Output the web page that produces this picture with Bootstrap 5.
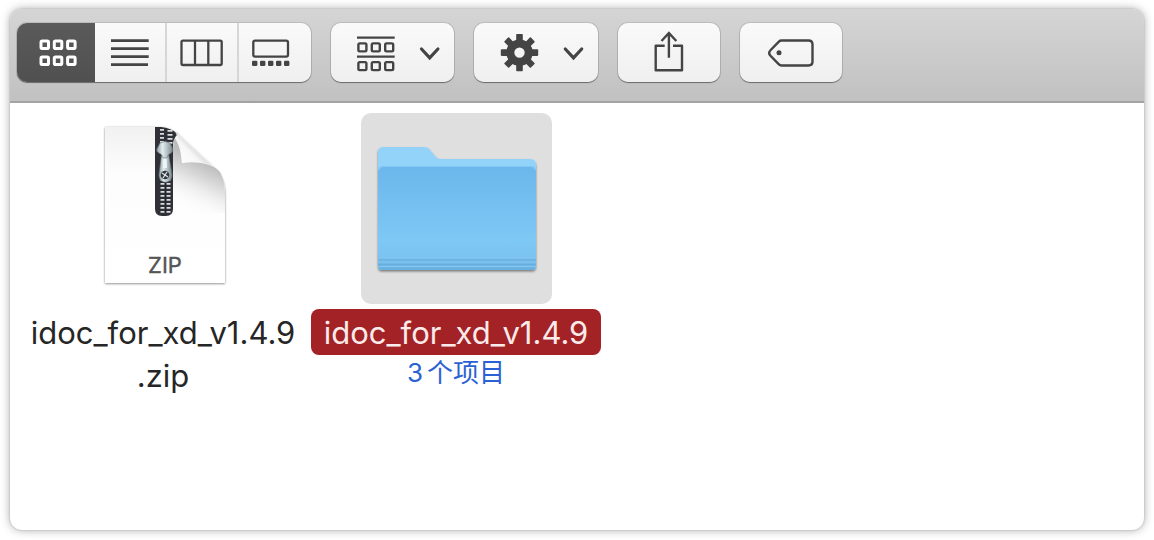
<!DOCTYPE html>
<html lang="zh-CN">
<head>
<meta charset="utf-8">
<meta name="viewport" content="width=device-width, initial-scale=1">
<title>Finder</title>
<link href="https://cdn.jsdelivr.net/npm/bootstrap@5.3.0/dist/css/bootstrap.min.css" rel="stylesheet">
<style>
  body { padding: 9px 10px 10px; background: #fff; font-family: Inter, "Noto Sans CJK SC", sans-serif; color: #262626; }
  .window { border-radius: 12px; overflow: hidden; background: #fff; box-shadow: 0 0 10px rgba(0,0,0,.34), 0 0 2px rgba(0,0,0,.2); }
  .toolbar { gap: 20px; padding: 14px 7px 19px; background: linear-gradient(#d5d5d5, #c1c1c1); border-bottom: 2px solid #a3a3a3; }
  .tool, .views { border-radius: 10px; box-shadow: 0 0 0 1px rgba(0,0,0,.1), 0 1px 1px rgba(0,0,0,.4); }
  .tool, .views .btn { padding: 0; border: 0; background: linear-gradient(#fafafa, #efefef); color: #444; }
  .tool:hover, .views .btn:hover { background: #f1f1f1; color: #444; }
  .views .btn { border-radius: 0; margin-left: 0 !important; }
  .views .btn + .btn + .btn { border-left: 2px solid #d6d6d6; }
  .views .btn:first-child { border-radius: 10px 0 0 10px; }
  .views .btn:last-child { border-radius: 0 10px 10px 0; }
  .views .btn.active { background: linear-gradient(#5a5a5a, #505050); color: #fff; }
  .toolbar svg { display: block; height: 59px; fill: none; stroke: currentColor; }
  .files { gap: 3px; padding: 10px 8px; }
  .file { width: 290px; }
  .thumb { width: 191px; height: 191px; border-radius: 10px; margin-bottom: 5px; }
  .selected .thumb { background: #dfdfdf; }
  .filename { padding: 2px 0 1px; font-size: 31px; line-height: 43px; border-radius: 8px; }
  .selected .filename { width: 100%; background: #a22226; color: #fbeaea; }
  .detail { color: #2a62d3; font-size: 26px; line-height: 36px; }
</style>
</head>
<body class="d-flex flex-column min-vh-100">
<main class="window d-flex flex-column flex-grow-1">
  <header class="toolbar d-flex align-items-center">
    <div class="views btn-group" role="group" aria-label="显示方式">
      <button type="button" class="btn active" aria-label="图标" aria-pressed="true">
        <svg width="78" viewBox="0 0 78 59" stroke-width="3"><g id="tiles"><rect x="24" y="18" width="7.5" height="7.5" rx="1.3"/><rect x="37.3" y="18" width="7.5" height="7.5" rx="1.3"/><rect x="50.6" y="18" width="7.5" height="7.5" rx="1.3"/></g><use href="#tiles" y="16"/></svg>
      </button>
      <button type="button" class="btn" aria-label="列表">
        <svg width="70" viewBox="0 0 70 59" stroke-width="2.6"><path d="M16 17.6h37.7M16 25.6h37.7M16 33.6h37.7M16 41.6h37"/></svg>
      </button>
      <button type="button" class="btn" aria-label="分栏">
        <svg width="70" viewBox="0 0 70 59" stroke-width="2.3"><rect x="14.5" y="17.6" width="40.2" height="24.4" rx="1.5"/><path d="M28 17.6V42M41.3 17.6V42"/></svg>
      </button>
      <button type="button" class="btn" aria-label="画廊">
        <svg width="72" viewBox="0 0 72 59" stroke-width="2.3"><rect x="14.3" y="17.6" width="34.7" height="16" rx="1.8"/><g fill="currentColor" stroke="none"><rect x="13" y="37.7" width="5.4" height="5.4" rx="1.3"/><rect x="21" y="37.7" width="5.4" height="5.4" rx="1.3"/><rect x="29" y="37.7" width="5.4" height="5.4" rx="1.3"/><rect x="37" y="37.7" width="5.4" height="5.4" rx="1.3"/><rect x="45" y="37.7" width="5.4" height="5.4" rx="1.3"/></g></svg>
      </button>
    </div>
    <button type="button" class="btn tool" aria-label="分组">
      <svg width="123" viewBox="0 0 123 59" stroke-width="2.4"><path d="M26 14.6h37.7M26 33.6h37.7"/><g id="row"><rect x="27.4" y="20.4" width="8" height="8" rx="1.3"/><rect x="40.8" y="20.4" width="8" height="8" rx="1.3"/><rect x="54.2" y="20.4" width="8" height="8" rx="1.3"/></g><use href="#row" y="18.7"/><path d="M90.5 26l8.200 8.800 8.200-8.800" stroke-width="3.2" stroke-linecap="round"/></svg>
    </button>
    <button type="button" class="btn tool" aria-label="操作">
      <svg width="124" viewBox="0 0 124 59"><g transform="translate(45.5 29.6)"><circle r="9.200" stroke-width="8"/><g fill="currentColor" stroke="none"><g id="teeth"><rect id="tooth" x="-3.300" y="-18.700" width="6.600" height="8" rx=".8"/><use href="#tooth" transform="rotate(90)"/><use href="#tooth" transform="rotate(180)"/><use href="#tooth" transform="rotate(270)"/></g><use href="#teeth" transform="rotate(45)"/></g></g><path d="M91.300 26l8.200 8.800 8.200-8.800" stroke-width="3.200" stroke-linecap="round"/></svg>
    </button>
    <button type="button" class="btn tool" aria-label="共享">
      <svg width="102" viewBox="0 0 102 59" stroke-width="2.4"><path d="M46.7 22.8h-9v24.5H64V22.8h-9" stroke-linejoin="round"/><path d="M50.9 34.700V10M43.500 18l7.400-8 7.400 8"/></svg>
    </button>
    <button type="button" class="btn tool" aria-label="标签">
      <svg width="102" viewBox="0 0 102 59" stroke-width="2.4"><path d="M41.500 17.500h27q4 0 4 4v17q0 4-4 4h-27q-1.500 0-2.600-1.100l-8.200-8.400q-3-3 0-6l8.200-8.400q1.100-1.100 2.600-1.100z"/><circle cx="39" cy="29.800" r="2.500" fill="currentColor" stroke="none"/></svg>
    </button>
  </header>
  <ul class="files d-flex flex-wrap list-unstyled mb-0">
    <li class="file d-flex flex-column align-items-center text-center">
      <svg class="thumb" viewBox="0 0 191 191" role="img" aria-label="ZIP">
        <defs>
          <linearGradient id="paper" x2="0" y2="1"><stop stop-color="#f1f1f1"/><stop offset=".3" stop-color="#fdfdfd"/><stop offset="1" stop-color="#fff"/></linearGradient>
          <linearGradient id="shade" gradientUnits="userSpaceOnUse" x1="142" y1="52" x2="120" y2="98"><stop stop-color="#bdbdbd"/><stop offset=".4" stop-color="#e2e2e2"/><stop offset="1" stop-color="#fff" stop-opacity="0"/></linearGradient>
          <linearGradient id="curl" gradientUnits="userSpaceOnUse" x1="113" y1="50" x2="129" y2="34"><stop stop-color="#fff"/><stop offset=".6" stop-color="#f7f7f7"/><stop offset="1" stop-color="#d2d2d2"/></linearGradient>
          <linearGradient id="metal"><stop stop-color="#8b999e"/><stop offset=".35" stop-color="#e2edf0"/><stop offset=".65" stop-color="#b3c0c4"/><stop offset="1" stop-color="#78868b"/></linearGradient>
          <filter id="drop" x="-10%" y="-10%" width="120%" height="120%"><feDropShadow dx="0" dy=".7" stdDeviation="1.300" flood-opacity=".5"/></filter>
        </defs>
        <path id="sheet" d="M37 14h53c12 0 18 5 24 11l27 25c10 9 16 16 16 30v90H37z" fill="url(#paper)" filter="url(#drop)"/>
        <path d="M106 24c6 8 7 17 8 26 14-2 30 0 38 9 3 5 5 12 5 21v20H100z" fill="url(#shade)"/>
        <path d="M87 14h6q10 1 17 7-5 4-5 11v64q0 7-7 7h-4q-7 0-7-7z" fill="#303136"/>
        <path d="M94 16v15M94.500 66v34M100.500 66v34" stroke="#d7dcdf" stroke-width="4" stroke-dasharray="1.800 2.200"/>
        <path d="M102 17v14" stroke="#d7dcdf" stroke-width="5" stroke-dasharray="1.800 2.200"/>
        <path d="M97.500 66v33" stroke="#24252a" stroke-width="1.200"/>
        <path d="M94 38h6l4 23c1 11-14 11-13 0z" fill="url(#metal)" stroke="#606c71" stroke-width=".6"/>
        <path d="M95.500 45h3l.5 10h-4z" fill="#edf5f7"/>
        <path d="M92 30q5-3 10 0l2 4q2 4-1 6l-3 2-1 3h-4l-1-3-3-2q-4-2-1-6z" fill="url(#metal)" stroke="#69777c" stroke-width=".6"/>
        <circle cx="97" cy="62" r="4.300" fill="#34393c"/><path d="M94 60l6 4M95 65l4-6" stroke="#dce5e7" stroke-width="1.300"/>
        <path d="M107 19c6 9 7 20 7 31 8-2 21-2 30 3l-30-28q-3-4-7-6z" fill="url(#curl)"/>
        <text x="97" y="160" text-anchor="middle" font-size="22" fill="#555" stroke="#555" stroke-width=".4">ZIP</text>
      </svg>
      <span class="filename">idoc_for_xd_v1.4.9<br>.zip</span>
    </li>
    <li class="file selected d-flex flex-column align-items-center text-center">
      <svg class="thumb" viewBox="0 0 191 191" role="img" aria-label="文件夹">
        <defs>
          <linearGradient id="front" x2="0" y2="1"><stop stop-color="#6bb7ec"/><stop offset=".72" stop-color="#7ec8f5"/><stop offset=".86" stop-color="#7bc3f1"/><stop offset="1" stop-color="#69afe0"/></linearGradient>
          <filter id="under" x="-10%" y="-10%" width="120%" height="125%"><feDropShadow dx="0" dy="1.500" stdDeviation="1.300" flood-opacity=".45"/></filter>
        </defs>
        <path d="M17 39q0-5 6-5h40q4 0 6 3l5 6q2 3 5 3h90q6 0 6 6v101q0 4-4 4H21q-4 0-4-4z" fill="#93d3fa" filter="url(#under)"/>
        <path d="M17 59q0-6 6-6h146q6 0 6 6v94q0 4-4 4H21q-4 0-4-4z" fill="url(#front)"/>
        <path d="M18 57q1-3.500 5-3.500h146q4 0 5 3.500" fill="none" stroke="#82c8f6"/>
        <path d="M17 144.500h158M17 149h158M17 153.500h158" stroke="#84c6f0" stroke-width="1"/>
        <path d="M17 147h158M17 151.500h158M18 156h156" stroke="#68aedc" stroke-width="1"/>
      </svg>
      <span class="filename">idoc_for_xd_v1.4.9</span>
      <span class="detail"><span class="me-1">3</span>个项目</span>
    </li>
  </ul>
</main>
<script src="https://cdn.jsdelivr.net/npm/bootstrap@5.3.0/dist/js/bootstrap.bundle.min.js"></script>
</body>
</html>
